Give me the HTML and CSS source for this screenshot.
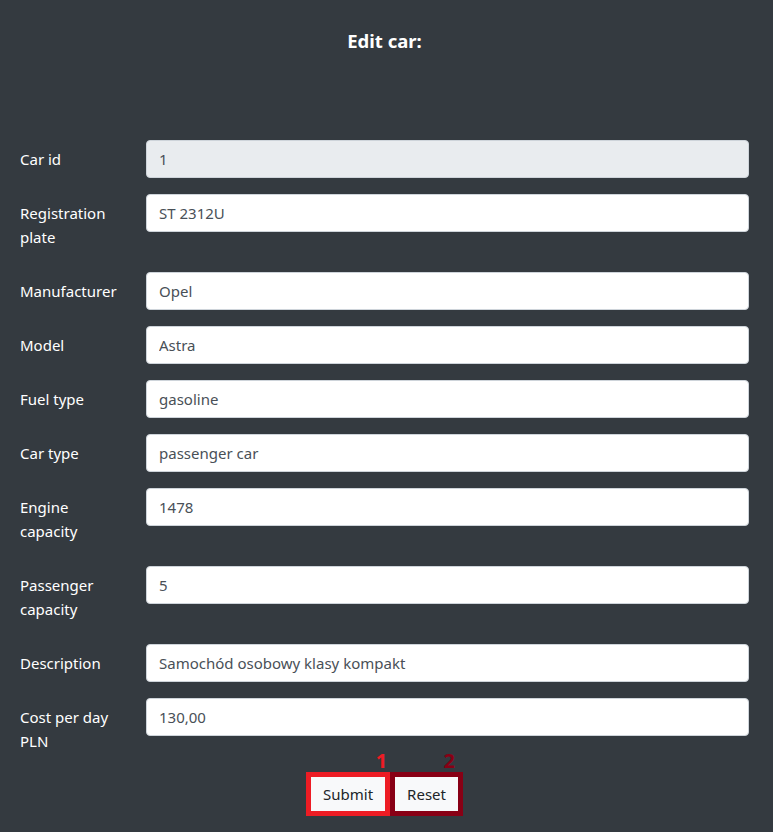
FILE: index.html
```html
<!DOCTYPE html>
<html lang="en">
<head>
<meta charset="utf-8">
<title>Edit car</title>
<link rel="stylesheet" href="styles.css">
</head>
<body>
<div class="page">
  <h1 class="title">Edit car:</h1>
  <form class="car-form">
    <div class="field">
      <label class="field-label">Car id</label>
      <input class="field-input readonly" type="text" value="1" readonly>
    </div>
    <div class="field">
      <label class="field-label">Registration plate</label>
      <input class="field-input" type="text" value="ST 2312U">
    </div>
    <div class="field">
      <label class="field-label">Manufacturer</label>
      <input class="field-input" type="text" value="Opel">
    </div>
    <div class="field">
      <label class="field-label">Model</label>
      <input class="field-input" type="text" value="Astra">
    </div>
    <div class="field">
      <label class="field-label">Fuel type</label>
      <input class="field-input" type="text" value="gasoline">
    </div>
    <div class="field">
      <label class="field-label">Car type</label>
      <input class="field-input" type="text" value="passenger car">
    </div>
    <div class="field">
      <label class="field-label">Engine capacity</label>
      <input class="field-input" type="text" value="1478">
    </div>
    <div class="field">
      <label class="field-label">Passenger capacity</label>
      <input class="field-input" type="text" value="5">
    </div>
    <div class="field">
      <label class="field-label">Description</label>
      <input class="field-input" type="text" value="Samochód osobowy klasy kompakt">
    </div>
    <div class="field">
      <label class="field-label">Cost per day PLN</label>
      <input class="field-input" type="text" value="130,00">
    </div>
    <div class="actions">
      <button type="submit" class="btn btn-submit"><span class="marker marker-1">1</span>Submit</button>
      <button type="reset" class="btn btn-reset"><span class="marker marker-2">2</span>Reset</button>
    </div>
  </form>
</div>
</body>
</html>
```
FILE: styles.css
```css
html, body {
  margin: 0;
  padding: 0;
  background: #343a40;
}
body {
  font-family: "Segoe UI", "Noto Sans", "Open Sans", sans-serif;
  font-size: 15px;
  line-height: 24px;
  color: #ffffff;
}
.page {
  padding: 29px 24px 0 20px;
}
.title {
  margin: 0 0 87px 0;
  text-align: center;
  font-size: 18.5px;
  line-height: 24px;
  font-weight: 700;
  color: #ffffff;
}
.car-form {
  display: flex;
  flex-direction: column;
}
.field {
  display: flex;
  align-items: flex-start;
  margin-bottom: 16px;
}
.field-label {
  width: 100px;
  flex-shrink: 0;
  margin-right: 26px;
  padding: 7px 0;
  line-height: 24px;
}
.field-input {
  flex: 1;
  min-width: 0;
  box-sizing: border-box;
  height: 38px;
  padding: 6px 12px;
  border: 1px solid #ced4da;
  border-radius: 4px;
  background: #ffffff;
  color: #495057;
  font-family: inherit;
  font-size: 15px;
  line-height: 24px;
  outline: none;
}
.field-input.readonly {
  background: #e9ecef;
}
.actions {
  display: flex;
  justify-content: center;
  margin-top: -4px;
}
.btn {
  position: relative;
  box-sizing: border-box;
  height: 44px;
  padding: 0 12px;
  background: #f8f9fa;
  color: #212529;
  font-family: inherit;
  font-size: 15px;
  line-height: 24px;
  border: 5px solid transparent;
  cursor: pointer;
}
.btn-submit {
  border-color: #ed1c24;
}
.btn-reset {
  border-color: #880015;
}
.marker {
  position: absolute;
  bottom: 100%;
  margin-bottom: 6px;
  font-size: 20px;
  line-height: 20px;
  font-weight: 700;
}
.marker-1 {
  right: -2px;
  color: #ed1c24;
}
.marker-2 {
  right: 3px;
  color: #880015;
}
```
